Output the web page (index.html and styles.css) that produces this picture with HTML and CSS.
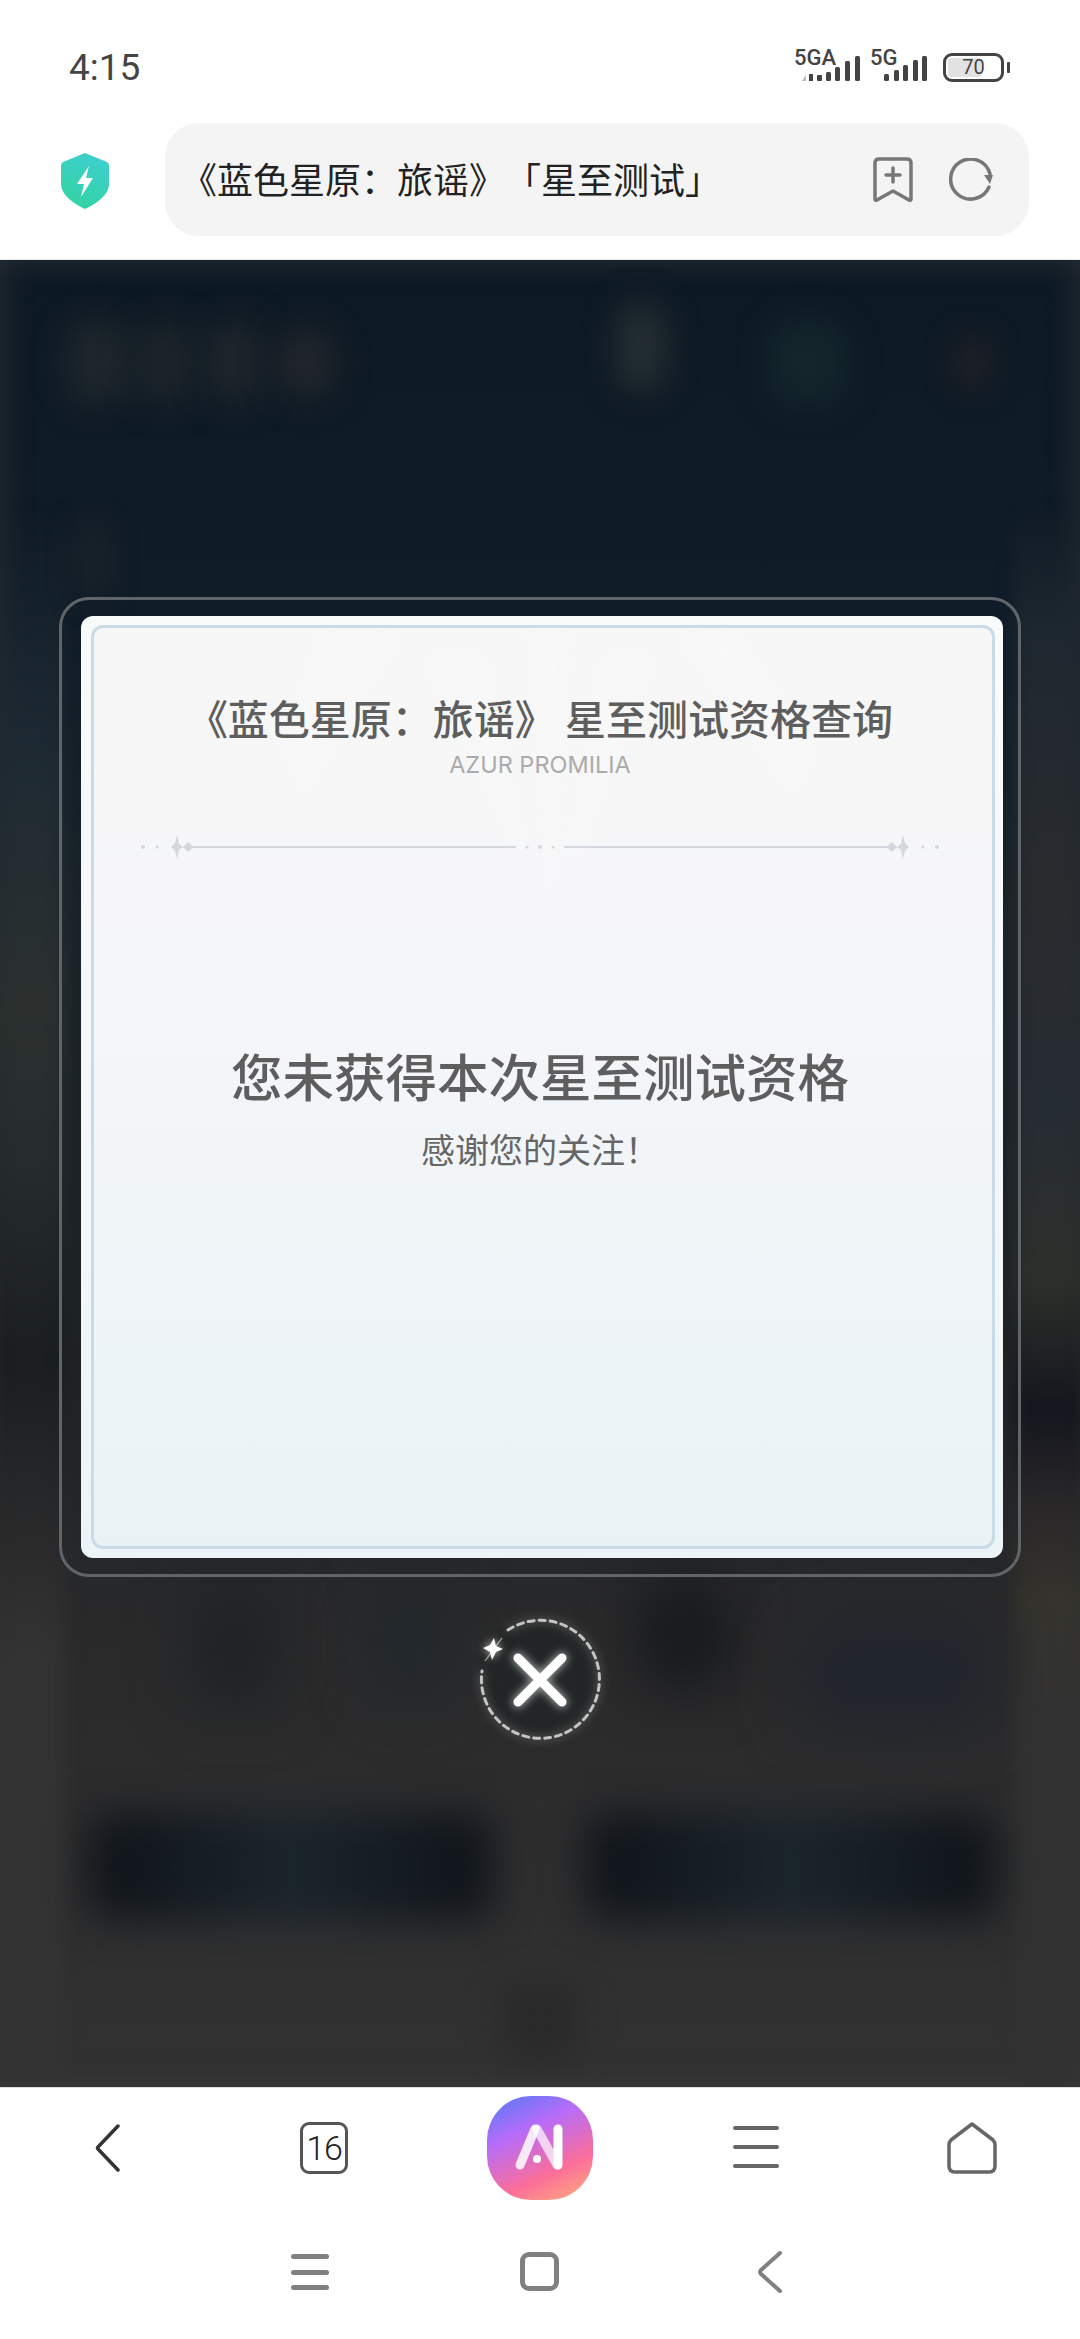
FILE: index.html
```html
<!DOCTYPE html>
<html lang="zh-CN">
<head>
    <meta charset="UTF-8">
    <meta name="viewport" content="width=device-width, initial-scale=1.0">
    <title>《蓝色星原：旅谣》「星至测试」</title>
    <link rel="stylesheet" href="styles.css">
</head>
<body>
    <div id="phone">
        <!-- Status bar -->
        <div class="status-bar">
            <span class="clock">4:15</span>
            <div class="status-icons">
                <div class="sim">
                    <span class="sim-label">5GA</span>
                    <svg width="60" height="30" viewBox="0 0 60 30" fill="#444">
                        <path d="M5 21v6H1z" fill="#bbb"/>
                        <rect x="8" y="20" width="4" height="7"/>
                        <rect x="16" y="21" width="5" height="6" rx="1"/>
                        <rect x="25" y="18" width="5" height="9" rx="1.5"/>
                        <rect x="34" y="13" width="5" height="14" rx="1.5"/>
                        <rect x="44" y="7" width="5" height="20" rx="1.5"/>
                        <rect x="54" y="2" width="5" height="25" rx="1.5"/>
                    </svg>
                </div>
                <div class="sim sim-short">
                    <span class="sim-label">5G</span>
                    <svg width="46" height="30" viewBox="0 0 46 30" fill="#444">
                        <rect x="1" y="20" width="5" height="7" rx="1.5"/>
                        <rect x="11" y="16" width="5" height="11" rx="1.5"/>
                        <rect x="20" y="11" width="5" height="16" rx="1.5"/>
                        <rect x="30" y="6" width="5" height="21" rx="1.5"/>
                        <rect x="39" y="2" width="5" height="25" rx="1.5"/>
                    </svg>
                </div>
                <div class="battery">
                    <div class="battery-body">
                        <div class="battery-fill"></div>
                        <span class="battery-num">70</span>
                    </div>
                    <div class="battery-nub"></div>
                </div>
            </div>
        </div>

        <!-- Browser toolbar -->
        <div class="toolbar">
            <svg class="shield" width="50" height="56" viewBox="0 0 50 56">
                <defs>
                    <linearGradient id="shieldFill" x1="0.8" y1="0" x2="0.4" y2="1">
                        <stop offset="0" stop-color="#3fcfd0"/>
                        <stop offset="1" stop-color="#33d3a4"/>
                    </linearGradient>
                </defs>
                <path d="M25 0 L47 9 Q49 10 49 13 V31 C49 42 36 51 25 56 C14 51 1 42 1 31 V13 Q1 10 3 9 Z" fill="url(#shieldFill)"/>
                <path d="M29 13 L17 31 H24 L21 44 L33 25 H26 Z" fill="#fff"/>
            </svg>
            <div class="address-bar">
                <span class="address-text">《蓝色星原：旅谣》「星至测试」</span>
                <svg class="addr-icon" width="40" height="46" viewBox="0 0 40 46" fill="none" stroke="#777" stroke-width="3.5" stroke-linejoin="round" stroke-linecap="round">
                    <path d="M2 6 Q2 2 6 2 H34 Q38 2 38 6 V42 Q38 44 36 43 L20 34 L4 43 Q2 44 2 42 Z"/>
                    <path d="M20 11 V25 M13 18 H27"/>
                </svg>
                <svg class="addr-icon" width="44" height="44" viewBox="0 0 44 44" fill="none" stroke="#777" stroke-width="3.5" stroke-linecap="round">
                    <path d="M40 29 A20 20 0 1 1 41 16"/>
                    <path d="M35 17 H44 L41 26 Z" fill="#777" stroke="none"/>
                </svg>
            </div>
        </div>

        <!-- Page behind the dialog, blurred -->
        <div class="stage">
            <div class="backdrop">
                <i class="side side-left"></i>
                <i class="side side-right"></i>
                <i class="blob blob-t1"></i>
                <i class="blob blob-t2"></i>
                <i class="blob blob-t3"></i>
                <i class="blob blob-t4"></i>
                <i class="blob blob-teal"></i>
                <i class="blob blob-teal2"></i>
                <i class="blob blob-red"></i>
                <i class="blob blob-left"></i>
                <i class="blob blob-top-a"></i>
                <i class="blob blob-top-b"></i>
                <i class="blob blob-top-c"></i>
                <i class="blob blob-top-d"></i>
                <i class="blob blob-btn blob-btn-l"></i>
                <i class="blob blob-btn blob-btn-r"></i>
                <i class="blob blob-foot"></i>
            </div>

            <div class="modal">
                <div class="card">
                    <div class="card-inner">
                        <svg class="card-deco" width="900" height="360" viewBox="0 0 900 360" fill="#fff">
                            <path d="M230 10 L300 10 L210 170 L190 120 Z" opacity=".55"/>
                            <path d="M640 10 L590 10 L700 170 L720 120 Z" opacity=".55"/>
                            <path d="M440 0 L470 0 L462 290 L452 290 Z" opacity=".5"/>
                            <path d="M330 30 L390 30 L440 230 L420 230 Z" opacity=".35"/>
                            <path d="M560 30 L510 30 L470 230 L490 230 Z" opacity=".35"/>
                        </svg>
                        <h1 class="card-title">《蓝色星原：旅谣》 星至测试资格查询</h1>
                        <p class="card-sub">AZUR PROMILIA</p>
                        <svg class="divider" width="800" height="30" viewBox="0 0 800 30" fill="#d4d7db">
                            <g id="dividerHalf">
                                <circle cx="3" cy="15" r="2"/>
                                <circle cx="17" cy="15" r="1.5"/>
                                <path d="M37 3 L39 12 L43 15 L39 18 L37 27 L35 19 L31 15 L35 11 Z"/>
                                <path d="M43 15 L48 10 L54 15 L48 20 Z"/>
                                <rect x="50" y="14" width="326" height="2"/>
                                <circle cx="387" cy="15" r="1.5"/>
                            </g>
                            <use href="#dividerHalf" transform="matrix(-1 0 0 1 800 0)"/>
                            <circle cx="400" cy="15" r="2"/>
                        </svg>
                        <h2 class="result-title">您未获得本次星至测试资格</h2>
                        <p class="result-sub">感谢您的关注！</p>
                    </div>
                </div>
            </div>

            <button class="close-btn" aria-label="关闭">
                <svg width="150" height="150" viewBox="0 0 150 150" fill="none">
                    <defs>
                        <filter id="glow" x="-30%" y="-30%" width="160%" height="160%">
                            <feGaussianBlur stdDeviation="4"/>
                        </filter>
                    </defs>
                    <circle cx="75" cy="75" r="56" fill="#1d2024" opacity=".55" filter="url(#glow)"/>
                    <path d="M43 25 A59 59 0 1 1 17 66" stroke="#fff" stroke-opacity=".35" stroke-width="3" filter="url(#glow)"/>
                    <path d="M43 25 A59 59 0 1 1 17 66" stroke="#c4c4c4" stroke-width="3" stroke-dasharray="6 5" stroke-linecap="round"/>
                    <path d="M37 33 L20 56" stroke="#fff" stroke-width="1.2" stroke-opacity=".6"/>
                    <path d="M29 33 L31 41 L38 44 L31 47 L27 55 L25 47 L18 43 L25 40 Z" fill="#fff" opacity=".7" filter="url(#glow)"/>
                    <path d="M29 33 L31 41 L38 44 L31 47 L27 55 L25 47 L18 43 L25 40 Z" fill="#fff"/>
                    <path d="M53 53 L97 97 M97 53 L53 97" stroke="#fff" stroke-opacity=".6" stroke-width="11" stroke-linecap="round" filter="url(#glow)"/>
                    <path d="M53 53 L97 97 M97 53 L53 97" stroke="#fff" stroke-width="9" stroke-linecap="round"/>
                </svg>
            </button>
        </div>

        <!-- Browser bottom bar -->
        <div class="browser-nav">
            <svg width="26" height="48" viewBox="0 0 26 48" fill="none" stroke="#333" stroke-width="3.5" stroke-linecap="round" stroke-linejoin="round">
                <path d="M23 2 L3 23 Q2 24 3 25 L23 46"/>
            </svg>
            <div class="tab-count">16</div>
            <div class="app-badge">
                <svg width="60" height="50" viewBox="0 0 60 50" fill="none" stroke-linecap="round">
                    <path d="M48 6 V42" stroke="#fff" stroke-width="9"/>
                    <path d="M47 42 L27 6" stroke="#fff" stroke-opacity=".7" stroke-width="9"/>
                    <path d="M25 6 L10 42" stroke="#fff" stroke-opacity=".85" stroke-width="9"/>
                    <circle cx="27" cy="36" r="4" fill="#fff"/>
                </svg>
            </div>
            <svg width="46" height="44" viewBox="0 0 46 44" fill="#666">
                <rect y="0" width="46" height="4" rx="2"/>
                <rect y="19" width="46" height="4" rx="2"/>
                <rect y="38" width="46" height="4" rx="2"/>
            </svg>
            <svg width="50" height="52" viewBox="0 0 50 52" fill="none" stroke="#666" stroke-width="3.5" stroke-linejoin="round">
                <path d="M25 2 L46 18 Q48 20 48 23 V44 Q48 50 42 50 H8 Q2 50 2 44 V23 Q2 20 4 18 Z"/>
            </svg>
        </div>

        <!-- System nav -->
        <div class="system-nav">
            <svg width="38" height="36" viewBox="0 0 38 36" fill="#808080">
                <rect y="0" width="38" height="5" rx="2.5"/>
                <rect y="16" width="38" height="5" rx="2.5"/>
                <rect y="31" width="38" height="5" rx="2.5"/>
            </svg>
            <div class="sys-home"></div>
            <svg class="sys-back" width="26" height="42" viewBox="0 0 26 42" fill="none" stroke="#808080" stroke-width="4" stroke-linecap="round" stroke-linejoin="round">
                <path d="M23 2 L4 19 Q2 21 4 23 L23 40"/>
            </svg>
        </div>
    </div>
</body>
</html>
```

FILE: styles.css
```css
/* General */
* {
    box-sizing: border-box;
}

html, body {
    margin: 0;
    padding: 0;
}

body {
    background: #fff;
    font-family: "Noto Sans CJK SC", "Noto Sans", sans-serif;
    color: #222;
    text-spacing-trim: space-all;
}

#phone {
    width: 1080px;
    height: 2339px;
    display: flex;
    flex-direction: column;
    overflow: hidden;
}

/* Status bar */
.status-bar {
    height: 123px;
    flex: none;
    display: flex;
    justify-content: space-between;
    align-items: flex-start;
    padding: 44px 70px 0 69px;
}

.clock {
    font-family: Roboto, sans-serif;
    font-size: 37px;
    line-height: 48px;
    color: #444;
}

.status-icons {
    display: flex;
    gap: 8px;
    padding-top: 7px;
}

.sim {
    position: relative;
    width: 62px;
    height: 32px;
}

.sim svg {
    display: block;
    margin-top: 3px;
}

.sim-short {
    width: 60px;
    padding-left: 12px;
}

.sim-label {
    position: absolute;
    top: -4px;
    left: -7px;
    font-family: Roboto, sans-serif;
    font-size: 22px;
    font-weight: 500;
    line-height: 22px;
    color: #444;
}

.sim-short .sim-label {
    left: -1px;
}

.battery {
    display: flex;
    align-items: center;
    gap: 3px;
    margin-left: 4px;
}

.battery-body {
    position: relative;
    width: 61px;
    height: 29px;
    border: 3px solid #444;
    border-radius: 9px;
    padding: 2px;
}

.battery-fill {
    width: 33px;
    height: 100%;
    background: #e2e2e2;
    border-radius: 3px;
}

.battery-num {
    position: absolute;
    inset: 0;
    text-align: center;
    font-family: Roboto, sans-serif;
    font-size: 20px;
    line-height: 23px;
    color: #444;
}

.battery-nub {
    width: 3px;
    height: 11px;
    background: #444;
    border-radius: 1px;
}

/* Toolbar */
.toolbar {
    height: 137px;
    flex: none;
    display: flex;
    align-items: flex-start;
    padding-left: 60px;
    border-bottom: 1px solid #e8e8e8;
}

.shield {
    flex: none;
    margin-top: 30px;
}

.address-bar {
    width: 864px;
    height: 113px;
    margin-left: 55px;
    display: flex;
    align-items: center;
    padding: 0 36px 0 16px;
    background: #f4f4f4;
    border-radius: 34px;
}

.address-text {
    flex: 1;
    padding-bottom: 4px;
    font-size: 36px;
    color: #222;
    white-space: nowrap;
}

.addr-icon {
    flex: none;
    margin-left: 36px;
}

/* Blurred page + dialog */
.stage {
    position: relative;
    flex: 1;
    min-height: 0;
    display: flex;
    flex-direction: column;
    align-items: center;
    padding-top: 337px;
    overflow: hidden;
    background: linear-gradient(180deg, #0d1924 0%, #101c27 20%, #1a2329 38%, #1e2224 60%, #2a2a2b 76%, #323232 100%);
}

.backdrop {
    position: absolute;
    inset: 0;
    overflow: hidden;
    box-shadow: inset 0 0 30px rgba(70, 70, 70, 0.5);
}

.side {
    position: absolute;
    top: 0;
    bottom: 0;
    width: 70px;
    display: block;
    filter: blur(8px);
}

.side-left {
    left: -5px;
    background: linear-gradient(180deg, transparent 250px, #1e2a33 500px, #2b302f 740px, #262b2c 900px, #1a1e1f 1100px, #2a2a2b 1280px, #333 1400px);
}

.side-right {
    right: -5px;
    background: linear-gradient(180deg, transparent 250px, #1f2830 380px, #292b2e 640px, #262c33 850px, #2d2f2a 1020px, #14161e 1150px, #2a2829 1250px, #34332d 1340px, #323232 1450px);
}

.blob {
    position: absolute;
    display: block;
    filter: blur(16px);
    border-radius: 24px;
}

.blob-t1 { left: 68px; top: 60px; width: 62px; height: 84px; background: #1f272c; }
.blob-t2 { left: 135px; top: 62px; width: 60px; height: 80px; background: #1d252a; }
.blob-t3 { left: 206px; top: 62px; width: 56px; height: 80px; background: #1f262b; }
.blob-t4 { left: 276px; top: 68px; width: 58px; height: 70px; background: #21262b; }
.blob-teal { left: 618px; top: 42px; width: 46px; height: 90px; background: #263032; }
.blob-teal2 { left: 770px; top: 60px; width: 75px; height: 85px; background: #14262c; }
.blob-red { left: 960px; top: 78px; width: 25px; height: 50px; background: #2b2426; }
.blob-left { left: 82px; top: 265px; width: 20px; height: 70px; background: #23292e; }
.blob-top-a { left: 190px; top: 1330px; width: 90px; height: 120px; background: #1f2325; filter: blur(28px); }
.blob-top-b { left: 370px; top: 1320px; width: 80px; height: 120px; background: #22282c; filter: blur(28px); }
.blob-top-c { left: 640px; top: 1320px; width: 90px; height: 110px; background: #17191c; filter: blur(28px); }
.blob-top-d { left: 800px; top: 1360px; width: 190px; height: 110px; background: #21252d; filter: blur(30px); }
.blob-btn {
    top: 1552px;
    height: 108px;
    background: linear-gradient(90deg, #0f1319, #1b252c 50%, #0f1319);
    filter: blur(20px);
}
.blob-btn-l { left: 88px; width: 405px; }
.blob-btn-r { left: 585px; width: 412px; }
.blob-foot { left: 500px; top: 1720px; width: 80px; height: 80px; background: #2a2a2a; }

.modal {
    position: relative;
    width: 962px;
    height: 980px;
    flex: none;
    padding: 16px 15px 16px 19px;
    border: 3px solid #5f6569;
    border-radius: 30px;
}

.card {
    height: 100%;
    padding: 9px 8px 9px 10px;
    background: linear-gradient(180deg, #f9fafa 0%, #f5f7f9 50%, #ecf4f7 100%);
    border-radius: 12px;
}

.card-inner {
    position: relative;
    height: 100%;
    display: flex;
    flex-direction: column;
    align-items: center;
    padding-right: 6px;
    border: 3px solid #c8dbe6;
    border-radius: 12px;
    background: linear-gradient(180deg, #f7f7f7 0%, #f5f6f8 40%, #f1f5f8 60%, #e9f3f6 100%);
}

.card-deco {
    position: absolute;
    top: 0;
    left: 0;
    filter: blur(8px);
    opacity: 0.35;
}

.card-title {
    position: relative;
    margin: 59px 0 0;
    font-size: 41px;
    font-weight: 500;
    line-height: 60px;
    color: #5e5e5e;
    white-space: nowrap;
}

.card-sub {
    position: relative;
    margin: 3px 0 0;
    font-family: Inter, sans-serif;
    font-size: 23.5px;
    line-height: 30px;
    color: #ababab;
}

.divider {
    position: relative;
    flex: none;
    margin-top: 52px;
}

.result-title {
    margin: 178px 0 0;
    font-size: 51.5px;
    font-weight: 500;
    line-height: 70px;
    color: #5e5e5e;
    white-space: nowrap;
}

.result-sub {
    margin: 17px 0 0;
    font-size: 34px;
    line-height: 44px;
    color: #666;
}

.close-btn {
    position: relative;
    flex: none;
    width: 150px;
    height: 150px;
    margin-top: 28px;
    padding: 0;
    background: none;
    border: 0;
}

.close-btn svg {
    display: block;
}

/* Bottom bars */
.browser-nav {
    height: 127px;
    flex: none;
    display: grid;
    grid-template-columns: repeat(5, 1fr);
    justify-items: center;
    align-items: center;
    padding-bottom: 7px;
    background: #fff;
    border-top: 1px solid #ddd;
}

.tab-count {
    width: 48px;
    height: 52px;
    border: 3px solid #555;
    border-radius: 9px;
    text-align: center;
    font-family: Roboto, sans-serif;
    font-size: 34px;
    font-weight: 300;
    letter-spacing: -1px;
    line-height: 46px;
    color: #222;
}

.app-badge {
    width: 106px;
    height: 104px;
    display: flex;
    align-items: center;
    justify-content: center;
    background: linear-gradient(155deg, #5c78f8 4%, #b86cf8 34%, #fb6e9a 70%, #ffb27a 100%);
    border-radius: 44px;
}

.system-nav {
    height: 125px;
    flex: none;
    display: flex;
    justify-content: center;
    align-items: center;
    gap: 191px;
    padding: 0 6px 10px 0;
    background: #fff;
}

.sys-home {
    width: 39px;
    height: 39px;
    border: 5px solid #808080;
    border-radius: 9px;
}

.sys-back {
    margin-left: 7px;
}
```
